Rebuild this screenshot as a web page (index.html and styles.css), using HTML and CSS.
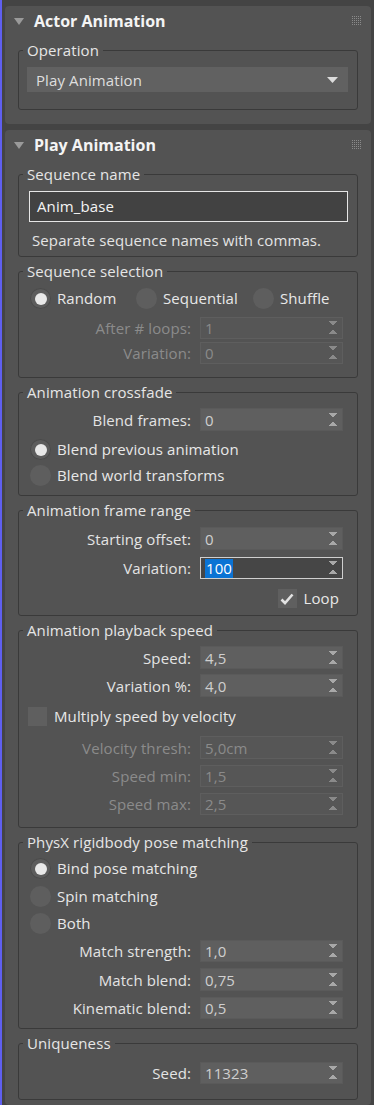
FILE: index.html
```html
<!DOCTYPE html>
<html>
<head>
<meta charset="utf-8">
<link rel="stylesheet" href="styles.css">
</head>
<body>
<div class="app">
  <section class="rollout r1">
    <div class="rhead">
      <svg class="tri" width="10" height="7" viewBox="0 0 10 7"><path d="M0 0H10L5 7Z" fill="#9a9a9a"/></svg>
      <span class="rtitle">Actor Animation</span>
      <span class="grip"></span>
    </div>
    <fieldset class="grp g-op">
      <legend>Operation</legend>
      <div class="dropdown"><span>Play Animation</span><svg width="11" height="6" viewBox="0 0 11 6"><path d="M0 0H11L5.5 6Z" fill="#dcdcdc"/></svg></div>
    </fieldset>
  </section>

  <section class="rollout r2">
    <div class="rhead">
      <svg class="tri" width="10" height="7" viewBox="0 0 10 7"><path d="M0 0H10L5 7Z" fill="#9a9a9a"/></svg>
      <span class="rtitle">Play Animation</span>
      <span class="grip"></span>
    </div>

    <fieldset class="grp g-seqname">
      <legend>Sequence name</legend>
      <div class="textbox">Anim_base</div>
      <p class="hint">Separate sequence names with commas.</p>
    </fieldset>

    <fieldset class="grp g-seqsel">
      <legend>Sequence selection</legend>
      <div class="radios-inline">
        <label class="radio on r-rand"><span class="dot"></span>Random</label>
        <label class="radio r-seq"><span class="dot"></span>Sequential</label>
        <label class="radio r-shuf"><span class="dot"></span>Shuffle</label>
      </div>
      <div class="row dis first h22"><span class="lbl">After # loops:</span><div class="spin"><span>1</span><i class="arr"></i></div></div>
      <div class="row dis h22 gap3"><span class="lbl">Variation:</span><div class="spin"><span>0</span><i class="arr"></i></div></div>
    </fieldset>

    <fieldset class="grp g-cross">
      <legend>Animation crossfade</legend>
      <div class="row first mt7"><span class="lbl">Blend frames:</span><div class="spin"><span>0</span><i class="arr"></i></div></div>
      <div class="vradios cross">
        <label class="radio on"><span class="dot"></span>Blend previous animation</label>
        <label class="radio"><span class="dot"></span>Blend world transforms</label>
      </div>
    </fieldset>

    <fieldset class="grp g-range">
      <legend>Animation frame range</legend>
      <div class="row first"><span class="lbl">Starting offset:</span><div class="spin"><span>0</span><i class="arr"></i></div></div>
      <div class="row gap7 h22"><span class="lbl">Variation:</span><div class="spin focus"><span class="sel">100</span><i class="arr"></i></div></div>
      <div class="loopline"><label class="check on"><span class="box"><svg width="14" height="12" viewBox="0 0 14 12"><path d="M1.5 6.5L5 10L12.5 1.5" fill="none" stroke="#e2e2e2" stroke-width="2.6"/></svg></span>Loop</label></div>
    </fieldset>

    <fieldset class="grp g-speed">
      <legend>Animation playback speed</legend>
      <div class="row first mt7"><span class="lbl">Speed:</span><div class="spin"><span>4,5</span><i class="arr"></i></div></div>
      <div class="row gap5"><span class="lbl">Variation %:</span><div class="spin"><span>4,0</span><i class="arr"></i></div></div>
      <label class="check mult"><span class="box"></span>Multiply speed by velocity</label>
      <div class="row dis mt10"><span class="lbl">Velocity thresh:</span><div class="spin"><span>5,0cm</span><i class="arr"></i></div></div>
      <div class="row dis gap6 h22"><span class="lbl">Speed min:</span><div class="spin"><span>1,5</span><i class="arr"></i></div></div>
      <div class="row dis gap6 h22"><span class="lbl">Speed max:</span><div class="spin"><span>2,5</span><i class="arr"></i></div></div>
    </fieldset>

    <fieldset class="grp g-physx">
      <legend>PhysX rigidbody pose matching</legend>
      <div class="vradios physx">
        <label class="radio on"><span class="dot"></span>Bind pose matching</label>
        <label class="radio"><span class="dot"></span>Spin matching</label>
        <label class="radio"><span class="dot"></span>Both</label>
      </div>
      <div class="row mt6 h22"><span class="lbl">Match strength:</span><div class="spin"><span>1,0</span><i class="arr"></i></div></div>
      <div class="row gap6"><span class="lbl">Match blend:</span><div class="spin"><span>0,75</span><i class="arr"></i></div></div>
      <div class="row gap6 h22"><span class="lbl">Kinematic blend:</span><div class="spin"><span>0,5</span><i class="arr"></i></div></div>
    </fieldset>

    <fieldset class="grp g-uniq">
      <legend>Uniqueness</legend>
      <div class="row mt10 h22"><span class="lbl">Seed:</span><div class="spin"><span>11323</span><i class="arr"></i></div></div>
    </fieldset>
  </section>
</div>
</body>
</html>
```

FILE: styles.css
```css
* { box-sizing: border-box; }
html, body { margin: 0; padding: 0; }
body {
  background: #444444;
  font-family: "Open Sans", "Noto Sans", sans-serif;
  font-size: 15px;
  letter-spacing: 0.1px;
  color: #e4e4e4;
  width: 374px;
  height: 1105px;
  overflow: hidden;
}
.app {
  border-left: 2px solid #5f5ff0;
  min-height: 1105px;
  padding: 6px 3px 0 3px;
}
.rollout {
  background: #535353;
  border-radius: 4px;
  width: 366px;
  margin-bottom: 6px;
}
.r1 { padding-bottom: 14px; }
.r2 { padding-bottom: 5px; }
.rhead {
  height: 30px;
  display: flex;
  align-items: center;
  padding-left: 9px;
  padding-right: 10px;
}
.tri { margin-right: 10px; margin-top: 1px; }
.rtitle {
  font-weight: 700;
  font-size: 16px;
  letter-spacing: 0;
  color: #f4f4f4;
  flex: 1;
}
.grip {
  width: 9px;
  height: 9px;
  margin-top: -2px;
  background-image: radial-gradient(circle at 0.5px 0.5px, #8a8a8a 0.7px, transparent 0.8px);
  background-size: 2px 2px;
}
.grp {
  margin: 5px 13px 0 13px;
  border: 1px solid #3a3a3a;
  border-radius: 3px;
  padding: 0 14px 0 10px;
  min-width: 0;
}
.grp legend {
  margin-left: -6px;
  padding: 0 4px 0 4px;
  line-height: 18px;
  height: 18px;
  color: #e6e6e6;
  white-space: nowrap;
}
.g-op legend { margin-left: -4px; }
.g-op { padding: 0 9px 17px 8px; }
.dropdown {
  margin-top: 8px;
  height: 25px;
  background: #616161;
  display: flex;
  align-items: center;
  justify-content: space-between;
  padding: 0 10px 0 9px;
  color: #dedede;
}
.g-seqname { padding: 0 9px 7px 10px; }
.textbox {
  margin-top: 8px;
  height: 31px;
  background: #424242;
  border: 1px solid #e6e6e6;
  padding: 0 7px;
  line-height: 28px;
  color: #f4f4f4;
}
.hint {
  margin: 9px 0 0 3px;
  line-height: 18px;
  color: #e4e4e4;
}
.radio {
  display: flex;
  align-items: center;
  height: 21px;
  line-height: 21px;
  color: #e8e8e8;
  white-space: nowrap;
}
.dot {
  width: 21px;
  height: 21px;
  border-radius: 50%;
  background: #5e5e5e;
  margin-right: 6px;
  flex: none;
  display: flex;
  align-items: center;
  justify-content: center;
}
.radio.on .dot { background: #5c5c5c; box-shadow: inset 0 0 0 1px #4a4a4a; }
.radio.on .dot::after {
  content: "";
  width: 12px;
  height: 12px;
  border-radius: 50%;
  background: #e8e8e8;
}
.radios-inline {
  display: flex;
  margin-top: 8px;
  padding-left: 1px;
}
.radios-inline .r-rand { width: 106px; }
.radios-inline .r-seq { width: 117px; }
.g-seqsel { padding-bottom: 13px; }
.row {
  display: grid;
  grid-template-columns: 1fr 143px;
  column-gap: 9px;
  align-items: center;
  height: 23px;
}
.row.h22 { height: 22px; }
.row.first { margin-top: 8px; }
.row.mt7 { margin-top: 7px; }
.row.mt6 { margin-top: 6px; }
.row.mt10 { margin-top: 10px; }
.row.gap3 { margin-top: 3px; }
.row.gap5 { margin-top: 5px; }
.row.gap6 { margin-top: 6px; }
.row.gap7 { margin-top: 7px; }
.lbl {
  text-align: right;
  color: #e4e4e4;
  white-space: nowrap;
  line-height: 20px;
}
.spin {
  height: 100%;
  background: #5f5f5f;
  border: 1px solid #5a5a5a;
  display: flex;
  align-items: center;
  justify-content: space-between;
  padding: 0 4px 0 4px;
  color: #cfcfcf;
  line-height: 20px;
}
.spin .arr {
  width: 8px;
  height: 14px;
  flex: none;
  background:
    linear-gradient(to top right, transparent 50%, currentColor 50%) 0 0 / 4px 5px no-repeat,
    linear-gradient(to top left, transparent 50%, currentColor 50%) 4px 0 / 4px 5px no-repeat,
    linear-gradient(to bottom right, transparent 50%, currentColor 50%) 0 8px / 4px 5px no-repeat,
    linear-gradient(to bottom left, transparent 50%, currentColor 50%) 4px 8px / 4px 5px no-repeat;
  color: #a8a8a8;
  margin-right: 1px;
}
.row.dis .lbl { color: #8b8b8b; }
.row.dis .spin { background: #565656; border-color: #5e5e5e; color: #8a8a8a; }
.row.dis .spin .arr { color: #8a8a8a; }
.spin.focus { background: #464646; border-color: #cfcfcf; color: #fff; }
.spin .sel { background: #0a73d4; color: #fff; line-height: 19px; padding: 0 1px; }
.vradios { display: flex; flex-direction: column; padding-left: 1px; }
.vradios.cross { margin-top: 8px; gap: 5px; }
.g-cross { padding-bottom: 9px; }
.g-range { padding-bottom: 7px; }
.loopline { display: flex; justify-content: flex-end; margin-top: 10px; padding-right: 4px; }
.check {
  display: flex;
  align-items: center;
  height: 19px;
  line-height: 19px;
  color: #e8e8e8;
  white-space: nowrap;
}
.box {
  width: 19px;
  height: 19px;
  background: #5f5f5f;
  margin-right: 7px;
  display: flex;
  align-items: center;
  justify-content: center;
  flex: none;
}
.check.mult { margin-top: 10px; margin-left: -1px; }
.g-speed { padding-bottom: 12px; }
.vradios.physx { margin-top: 7px; gap: 6.5px; }
.g-physx { padding-bottom: 9px; }
.g-uniq { padding-bottom: 15px; }
```
